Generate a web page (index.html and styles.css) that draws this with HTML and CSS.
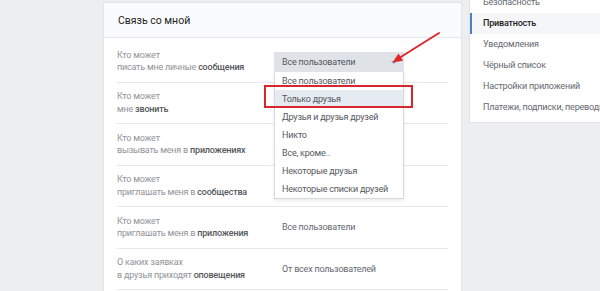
FILE: index.html
```html
<!DOCTYPE html>
<html>
<head>
    <meta charset="UTF-8">
    <title>Приватность</title>
    <link rel="stylesheet" href="styles.css">
</head>
<body>
    <div class="page">
        <div class="card">
            <div class="card-head">Связь со мной</div>
            <div class="rows">
                <div class="row">
                    <div class="label">Кто может<br>писать мне личные <b>сообщения</b></div>
                    <div class="dropdown">
                        <div class="dd-current">Все пользователи<span class="caret"></span></div>
                        <ul class="dd-list">
                            <li>Все пользователи</li>
                            <li class="hover">Только друзья</li>
                            <li>Друзья и друзья друзей</li>
                            <li>Никто</li>
                            <li>Все, кроме..</li>
                            <li>Некоторые друзья</li>
                            <li>Некоторые списки друзей</li>
                        </ul>
                    </div>
                </div>
                <div class="row">
                    <div class="label">Кто может<br>мне <b>звонить</b></div>
                    <div class="value">Все пользователи</div>
                </div>
                <div class="row">
                    <div class="label">Кто может<br>вызывать меня в <b>приложениях</b></div>
                    <div class="value">Все пользователи</div>
                </div>
                <div class="row">
                    <div class="label">Кто может<br>приглашать меня в <b>сообщества</b></div>
                    <div class="value">Все пользователи</div>
                </div>
                <div class="row">
                    <div class="label">Кто может<br>приглашать меня в <b>приложения</b></div>
                    <div class="value">Все пользователи</div>
                </div>
                <div class="row">
                    <div class="label">О каких заявках<br>в друзья приходят <b>оповещения</b></div>
                    <div class="value">От всех пользователей</div>
                </div>
                <div class="row">
                    <div class="label">&nbsp;</div>
                </div>
            </div>
        </div>
        <ul class="side">
            <li>Безопасность</li>
            <li class="active">Приватность</li>
            <li>Уведомления</li>
            <li>Чёрный список</li>
            <li>Настройки приложений</li>
            <li>Платежи, подписки, переводы</li>
        </ul>
    </div>

    <div class="mark"></div>
    <svg class="pointer" width="64" height="45" viewBox="0 0 64 45">
        <line x1="59" y1="8" x2="20" y2="32.5" stroke="#e0262b" stroke-width="2" stroke-linecap="round"/>
        <polygon points="12.5,37.5 23,35.8 18.5,28.5" fill="#e0262b"/>
    </svg>
</body>
</html>
```

FILE: styles.css
```css
html, body, ul, li{margin: 0;padding: 0;}
body{background: #edeef0;font-family: Roboto, "Noto Sans", sans-serif;font-size: 9px;letter-spacing: -0.2px;color: #000;overflow: hidden;}

.page{display: flex;align-items: flex-start;gap: 9px;padding: 3px 0 0 104px;width: 700px;}

.card{width: 357px;flex: none;background: #fff;box-shadow: 0 0 0 1px #e3e4e8;}
.card-head{height: 35px;line-height: 35px;padding-left: 14px;font-size: 10.5px;letter-spacing: 0;color: #222;background: #fafbfc;border-bottom: 1px solid #e7e8ec;box-sizing: border-box;}

.rows{padding: 3px 13px 0;}
.row{position: relative;display: flex;align-items: center;height: 41.5px;border-bottom: 1px solid #e7e8ec;box-sizing: border-box;}
.label{width: 157px;flex: none;line-height: 12.5px;color: #909399;}
.label b{color: #55585c;font-weight: 500;}
.value{padding-left: 8px;color: #656970;}

.dropdown{position: absolute;left: 157px;top: 11px;width: 130px;z-index: 2;}
.dd-current{position: relative;height: 20px;line-height: 20px;padding-left: 8px;background: #dfe3e8;color: #55585c;}
.caret{position: absolute;right: 7px;top: 9px;border: 3px solid transparent;border-top-color: #8a99aa;border-bottom: 0;}
.dd-list{list-style: none;background: #fff;border: 1px solid #d3d9de;border-top: 0;box-shadow: 0 2px 4px rgba(0,0,0,0.08);}
.dd-list li{height: 18px;line-height: 18px;padding-left: 7px;color: #55585c;}
.dd-list li.hover{background: #e5ebf1;}

.side{list-style: none;width: 200px;flex: none;margin-top: -14px;padding: 3px 0 4px;background: #fff;box-shadow: 0 0 0 1px #e3e4e8;}
.side li{height: 21px;line-height: 21px;padding-left: 11px;color: #656970;border-left: 2px solid transparent;}
.side li.active{border-left-color: #5181b8;background: #f5f6f8;color: #222;font-weight: 500;}

.mark{position: absolute;left: 264px;top: 85px;width: 145px;height: 19px;border: 2px solid #d8262d;z-index: 3;}
.pointer{position: absolute;left: 380px;top: 25px;z-index: 3;}
```
